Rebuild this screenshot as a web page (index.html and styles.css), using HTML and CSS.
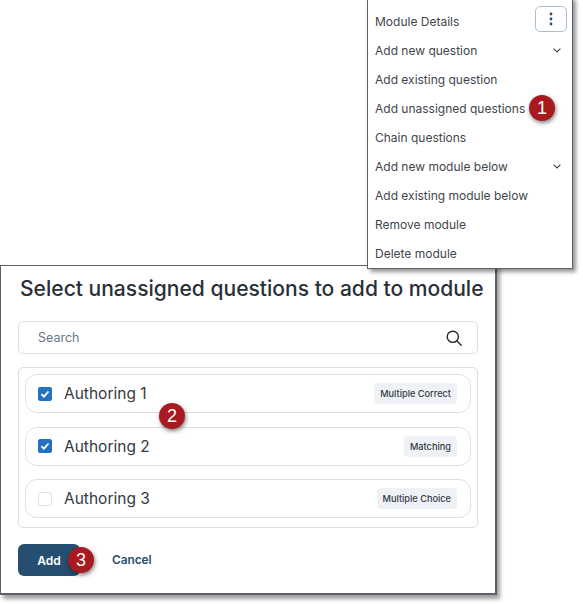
FILE: index.html
```html
<!DOCTYPE html>
<html lang="en">
<head>
<meta charset="utf-8">
<title>Select unassigned questions</title>
<link rel="stylesheet" href="styles.css">
</head>
<body>
<section class="dialog">
  <h1 class="title">Select unassigned questions to add to module</h1>
  <div class="search">
    <span>Search</span>
    <svg class="search-icon" width="16" height="16" viewBox="0 0 16 16" fill="none" stroke="#23272e" stroke-width="1.4" stroke-linecap="round"><circle cx="6.8" cy="6.8" r="5.6"/><path d="M11 11l4.2 4.2"/></svg>
  </div>
  <div class="list">
    <div class="row">
      <span class="check on"><svg width="14" height="14" viewBox="0 0 14 14" fill="none" stroke="#fff" stroke-width="1.8"><path d="M3.4 7.2l2.5 2.5 4.6-5.2"/></svg></span>
      <span class="name">Authoring 1</span>
      <span class="badge">Multiple Correct</span>
    </div>
    <div class="row">
      <span class="check on"><svg width="14" height="14" viewBox="0 0 14 14" fill="none" stroke="#fff" stroke-width="1.8"><path d="M3.4 7.2l2.5 2.5 4.6-5.2"/></svg></span>
      <span class="name">Authoring 2</span>
      <span class="badge">Matching</span>
    </div>
    <div class="row">
      <span class="check"></span>
      <span class="name">Authoring 3</span>
      <span class="badge">Multiple Choice</span>
    </div>
  </div>
  <div class="actions">
    <button class="add">Add</button>
    <button class="cancel">Cancel</button>
  </div>
</section>

<nav class="menu">
  <div class="item">Module Details</div>
  <div class="item">Add new question<svg class="chev" width="8" height="5" viewBox="0 0 8 5" fill="none" stroke="#3a4048" stroke-width="1.1"><path d="M.6.7L4 4l3.4-3.3"/></svg></div>
  <div class="item">Add existing question</div>
  <div class="item">Add unassigned questions</div>
  <div class="item">Chain questions</div>
  <div class="item">Add new module below<svg class="chev" width="8" height="5" viewBox="0 0 8 5" fill="none" stroke="#3a4048" stroke-width="1.1"><path d="M.6.7L4 4l3.4-3.3"/></svg></div>
  <div class="item">Add existing module below</div>
  <div class="item">Remove module</div>
  <div class="item">Delete module</div>
  <button class="kebab" aria-label="More"><svg width="4" height="14" viewBox="0 0 4 14" fill="#2c4a66"><circle cx="2" cy="2" r="1.4"/><circle cx="2" cy="7" r="1.4"/><circle cx="2" cy="12" r="1.4"/></svg></button>
</nav>

<span class="step step-1">1</span>
<span class="step step-2">2</span>
<span class="step step-3">3</span>
</body>
</html>
```

FILE: styles.css
```css
* { box-sizing: border-box; }
html, body { margin: 0; height: 100%; }
body {
  position: relative;
  width: 583px;
  height: 604px;
  overflow: hidden;
  background: #fff;
  font-family: "Inter", "Liberation Sans", sans-serif;
  color: #343a42;
}
.dialog {
  position: absolute;
  left: 0;
  top: 265px;
  width: 497px;
  height: 330px;
  padding: 0 18px;
  background: #fff;
  border: 1px solid #5c6269;
  border-width: 1px 2px 2px 1px;
  box-shadow: 3px 4px 4px rgba(0,0,0,.38);
}
.title {
  margin: 9px 0 0 1px;
  font-size: 21.05px;
  line-height: 28px;
  font-weight: 500;
  white-space: nowrap;
  color: #2b3038;
}
.search {
  display: flex;
  align-items: center;
  justify-content: space-between;
  height: 33px;
  margin-top: 18px;
  margin-left: -1px;
  width: 460px;
  padding: 0 15px 0 19px;
  border: 1px solid #dcdfe3;
  border-radius: 5px;
  font-size: 12.5px;
  color: #66778a;
}
.list {
  display: flex;
  flex-direction: column;
  gap: 13.5px;
  width: 460px;
  height: 161px;
  margin: 13px 0 0 -1px;
  padding: 6px;
  border: 1px solid #dcdfe3;
  border-radius: 5px;
}
.row {
  display: flex;
  align-items: center;
  height: 39px;
  padding: 0 13px 0 12px;
  border: 1px solid #dcdfe3;
  border-radius: 12px;
}
.check {
  display: flex;
  align-items: center;
  justify-content: center;
  width: 14px;
  height: 14px;
  border: 1px solid #e0e4e9;
  border-radius: 2px;
  background: #fff;
}
.check.on { background: #2272c3; border-color: #2272c3; }
.check svg { flex: none; }
.name {
  margin-left: 12px;
  font-size: 15.5px;
  color: #343a42;
}
.badge {
  margin-left: auto;
  height: 21px;
  padding: 0 6px;
  display: flex;
  align-items: center;
  font-size: 9.2px;
  font-weight: 500;
  border-radius: 4px;
  background: #eef2f7;
  color: #343a42;
}
.actions {
  display: flex;
  align-items: center;
  gap: 32px;
  margin: 16px 0 0 -1px;
}
button { font-family: inherit; border: 0; padding: 0; cursor: pointer; }
.add {
  width: 62px;
  height: 32px;
  border-radius: 6px;
  background: #264e70;
  color: #fff;
  font-size: 12px;
  font-weight: 600;
}
.cancel {
  background: none;
  color: #264e70;
  font-size: 11.8px;
  font-weight: 600;
}
.menu {
  position: absolute;
  left: 367px;
  top: -3px;
  width: 206px;
  height: 272px;
  padding-top: 9px;
  background: #fff;
  border: 1px solid #5c6269;
  box-shadow: 3px 3px 4px rgba(0,0,0,.42);
}
.item {
  display: flex;
  align-items: center;
  justify-content: space-between;
  height: 29px;
  padding: 0 11px 0 7px;
  font-size: 12px;
  white-space: nowrap;
  color: #3f454d;
}
.kebab {
  position: absolute;
  left: 167px;
  top: 8px;
  width: 32px;
  height: 26px;
  display: flex;
  align-items: center;
  justify-content: center;
  background: #fff;
  border: 1px solid #a9bfd3;
  border-radius: 5px;
}
.step {
  position: absolute;
  width: 26px;
  height: 26px;
  display: flex;
  align-items: center;
  justify-content: center;
  border-radius: 50%;
  background: #a81920;
  color: #fff;
  font-family: "Liberation Sans", sans-serif;
  font-size: 18px;
  box-shadow: 1px 2px 4px rgba(0,0,0,.5);
}
.step-1 { left: 529px; top: 95px; }
.step-2 { left: 159px; top: 403px; }
.step-3 { left: 68px; top: 547px; }
```
